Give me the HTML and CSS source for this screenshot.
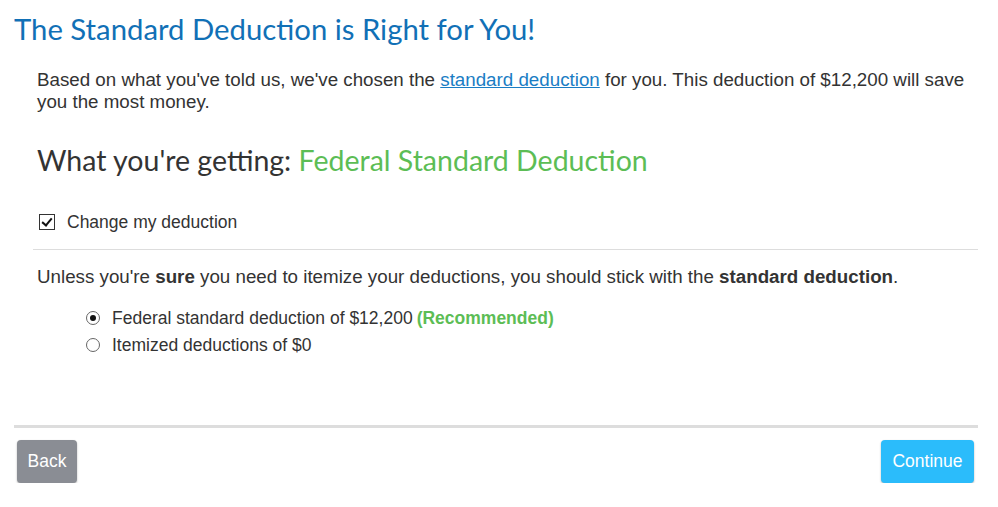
FILE: index.html
```html
<!DOCTYPE html>
<html lang="en">
<head>
  <meta charset="UTF-8">
  <meta name="viewport" content="width=device-width, initial-scale=1.0">
  <title>Standard Deduction</title>
  <link rel="stylesheet" href="styles.css">
</head>
<body>
  <div class="page">
    <h1>The Standard Deduction is Right for You!</h1>

    <div class="content">
      <p class="intro">
        Based on what you've told us, we've chosen the <a href="#">standard deduction</a> for you. This deduction of $12,200 will save you the most money.
      </p>

      <h2>What you're getting: <span class="green">Federal Standard Deduction</span></h2>

      <label class="change">
        <input type="checkbox" checked>
        Change my deduction
      </label>

      <hr class="divider">

      <p class="advice">
        Unless you're <b>sure</b> you need to itemize your deductions, you should stick with the <b>standard deduction</b>.
      </p>

      <div class="options">
        <label class="option">
          <input type="radio" name="deduction" checked>
          Federal standard deduction of $12,200 <b class="green">(Recommended)</b>
        </label>
        <label class="option">
          <input type="radio" name="deduction">
          Itemized deductions of $0
        </label>
      </div>
    </div>

    <div class="footer">
      <button class="btn back">Back</button>
      <button class="btn continue">Continue</button>
    </div>
  </div>
</body>
</html>
```

FILE: styles.css
```css
body {
  margin: 0;
  padding: 0;
  background: #fff;
  color: #333;
  font-family: 'Liberation Sans', Arial, sans-serif;
}

.page {
  width: 964px;
  padding: 0 20px 0 14px;
}

h1 {
  margin: 0;
  padding-top: 11px;
  font-family: Lato, sans-serif;
  font-weight: 400;
  font-size: 29.3px;
  line-height: 36px;
  color: #1170b6;
}

.content {
  padding: 0 0 0 19px;
}

.intro {
  margin: 22px 0 0 4px;
  font-size: 18.75px;
  line-height: 22px;
  width: 935px;
}

.intro a {
  color: #1a7dc4;
}

h2 {
  margin: 30px 0 0 4px;
  font-family: Lato, sans-serif;
  font-weight: 400;
  font-size: 28.5px;
  line-height: 34px;
  color: #333;
}

.green {
  color: #5cbd55;
}

.change {
  display: flex;
  align-items: center;
  gap: 12px;
  margin: 35px 0 0 6px;
  font-size: 17.5px;
  line-height: 20px;
}

.change input {
  appearance: none;
  margin: 0;
  width: 16px;
  height: 16px;
  border: 1px solid #333;
  background: #fff;
  position: relative;
}

.change input:checked::after {
  content: '';
  position: absolute;
  left: 4px;
  top: 1px;
  width: 4px;
  height: 8px;
  border: solid #111;
  border-width: 0 2px 2px 0;
  transform: rotate(40deg);
}

.divider {
  margin: 17px 0 0 0;
  border: none;
  border-top: 1px solid #ddd;
}

.advice {
  margin: 16px 0 0 4px;
  font-size: 18.75px;
  line-height: 22px;
}

.options {
  margin: 20px 0 0 53px;
  display: flex;
  flex-direction: column;
  gap: 7px;
}

.option {
  display: flex;
  align-items: center;
  gap: 6px;
  font-size: 17.5px;
  line-height: 20px;
}

.option b {
  margin-left: -2px;
}

.option input {
  appearance: none;
  margin: 0 6px 0 0;
  width: 14px;
  height: 14px;
  border: 1px solid #666;
  border-radius: 50%;
  background: #fff;
  display: grid;
  place-items: center;
}

.option input:checked::after {
  content: '';
  width: 6px;
  height: 6px;
  border-radius: 50%;
  background: #111;
}

.footer {
  margin-top: 70px;
  border-top: 3px solid #ddd;
  display: flex;
  justify-content: space-between;
  padding: 12px 4px 0 3px;
}

.btn {
  font-family: 'Liberation Sans', Arial, sans-serif;
  font-size: 17.5px;
  color: #fff;
  border: none;
  border-radius: 4px;
  height: 43px;
  cursor: pointer;
  box-shadow: 0 1px 2px rgba(0, 0, 0, 0.3);
}

.back {
  width: 60px;
  background: #8a8d94;
}

.continue {
  width: 93px;
  background: #2bbcfb;
}
```
